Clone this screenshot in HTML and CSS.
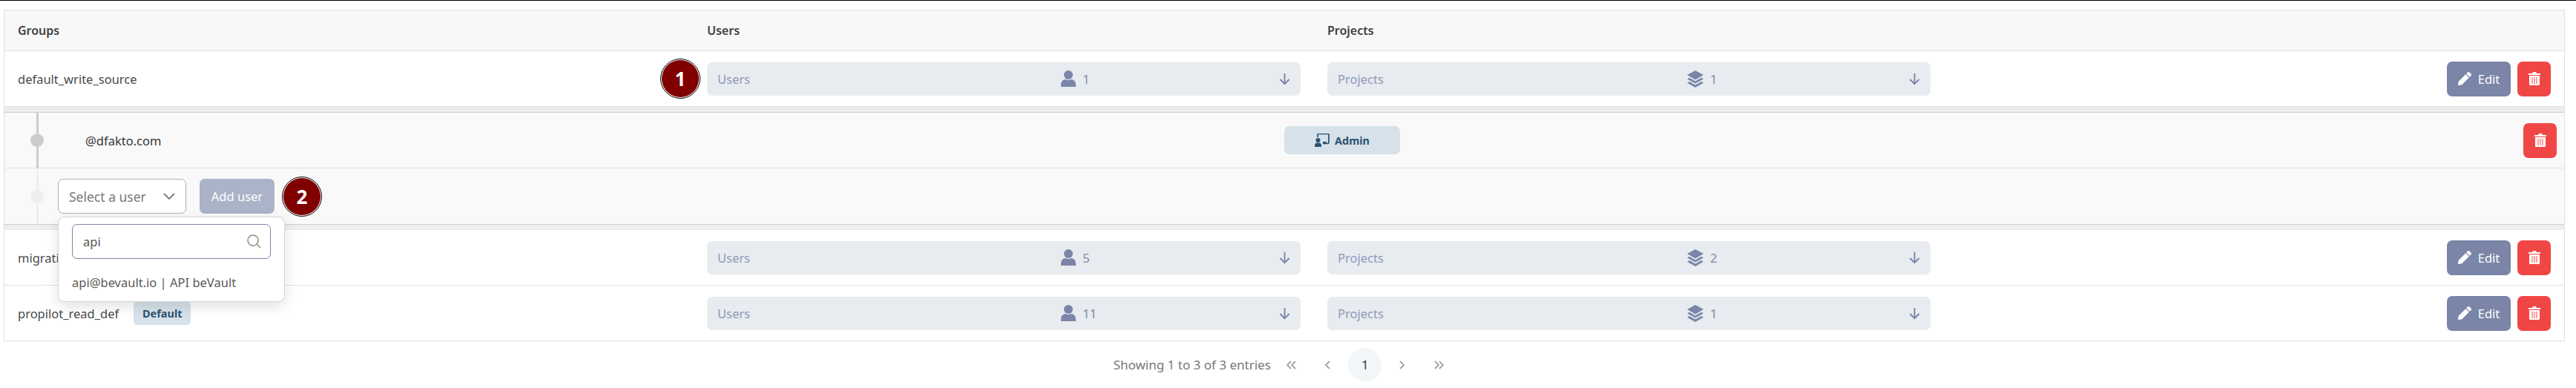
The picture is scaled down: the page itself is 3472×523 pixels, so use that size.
FILE: index.html
```html
<!DOCTYPE html>
<html>
<head>
  <title>Groups</title>
  <link rel="stylesheet" href="styles.css">
</head>
<body>

  <svg class="sprites" width="0" height="0">
    <symbol id="i-user" viewBox="0 0 20 22"><circle cx="10" cy="6" r="6"/><path d="M0 22v-3c0-4 3-7 6-7 1.300.700 2.600 1 4 1s2.700-.3 4-1c3 0 6 3 6 7v3z"/></symbol>
    <symbol id="i-stack" viewBox="0 0 22 23"><path d="M11 0l11 6-11 6.500L0 6z"/><path d="M3 9.800l8 4.700 8-4.700 3 1.700-11 6L0 11.500z"/><path d="M3 15l8 4.500 8-4.500 3 1.700L11 23 0 16.700z"/></symbol>
    <symbol id="i-down" viewBox="0 0 16 18"><path d="M8 1v15M1.500 9.500L8 16l6.500-6.500" fill="none" stroke="currentColor" stroke-width="2"/></symbol>
    <symbol id="i-pencil" viewBox="0 0 512 512"><path d="M498 142l-46 46c-5 5-12 5-17 0L324 77c-5-5-5-12 0-17l46-46c19-19 49-19 68 0l60 60c19 19 19 49 0 68zM284 100L22 362 0 484c-3 16 11 31 28 28l122-21 262-263c5-5 5-12 0-17L301 100c-5-5-12-5-17 0z"/></symbol>
    <symbol id="i-trash" viewBox="0 0 16 18"><path d="M0 2h5l1-2h4l1 2h5v2H0z"/><path fill-rule="evenodd" d="M1 5h14v11.500c0 1-.7 1.500-1.500 1.500h-11C1.700 18 1 17.500 1 16.500zM4.500 7v9h1V7zM7.500 7v9h1V7zM10.500 7v9h1V7z"/></symbol>
    <symbol id="i-board" viewBox="0 0 20 18"><circle cx="4.500" cy="9" r="3"/><path d="M0 18v-2c0-2 1.500-3.500 3-3.500h3c1.500 0 3 1.500 3 3.500v2z"/><path d="M4 5V2c0-1 .6-1.500 1.500-1.500h12C18.400.500 19 1 19 2v10c0 1-.6 1.500-1.500 1.500H11" fill="none" stroke="currentColor" stroke-width="1.700"/><path d="M11 11h5v2h-5z"/></symbol>
    <symbol id="i-chevron" viewBox="0 0 16 16"><path d="M1 4l7 7 7-7" fill="none" stroke="currentColor" stroke-width="1.800"/></symbol>
    <symbol id="i-search" viewBox="0 0 20 20"><circle cx="8.500" cy="8.500" r="7.500" fill="none" stroke="currentColor" stroke-width="1.500"/><path d="M14 14l5 5" stroke="currentColor" stroke-width="1.500"/></symbol>
    <symbol id="i-first" viewBox="0 0 16 12"><path d="M7 1L2 6l5 5M13 1L8 6l5 5" fill="none" stroke="currentColor" stroke-width="1.800"/></symbol>
    <symbol id="i-prev" viewBox="0 0 16 12"><path d="M10 1L5 6l5 5" fill="none" stroke="currentColor" stroke-width="1.800"/></symbol>
    <symbol id="i-next" viewBox="0 0 16 12"><path d="M6 1l5 5-5 5" fill="none" stroke="currentColor" stroke-width="1.800"/></symbol>
    <symbol id="i-last" viewBox="0 0 16 12"><path d="M3 1l5 5-5 5M9 1l5 5-5 5" fill="none" stroke="currentColor" stroke-width="1.800"/></symbol>
  </svg>

  <div class="table">
    <div class="row row-head">
      <div class="cell-group">Groups</div>
      <div>Users</div>
      <div>Projects</div>
      <div></div>
    </div>

    <div class="row">
      <div class="cell-group">
        <span class="group-name">default_write_source</span>
        <span class="marker">1</span>
      </div>
      <div class="cell-users">
        <div class="pill">
          <span>Users</span>
          <span class="count"><svg class="icon-user"><use href="#i-user"/></svg>1</span>
          <svg class="icon-down"><use href="#i-down"/></svg>
        </div>
      </div>
      <div>
        <div class="pill">
          <span>Projects</span>
          <span class="count"><svg class="icon-stack"><use href="#i-stack"/></svg>1</span>
          <svg class="icon-down"><use href="#i-down"/></svg>
        </div>
      </div>
      <div class="actions">
        <button class="btn btn-edit"><svg class="icon-pencil"><use href="#i-pencil"/></svg>Edit</button>
        <button class="btn btn-delete"><svg class="icon-trash"><use href="#i-trash"/></svg></button>
      </div>
    </div>

    <div class="band"></div>

    <div class="sub-rows">
      <div class="sub-row">
        <div class="tree">
          <span class="tree-line"></span>
          <span class="tree-dot"></span>
          <span class="tree-line"></span>
        </div>
        <div class="member">@dfakto.com</div>
        <div class="role"><svg class="icon-board"><use href="#i-board"/></svg>Admin</div>
        <button class="btn btn-delete btn-delete-sub"><svg class="icon-trash"><use href="#i-trash"/></svg></button>
      </div>
      <div class="sub-row sub-row-add">
        <div class="tree tree-light">
          <span class="tree-line"></span>
          <span class="tree-dot"></span>
          <span class="tree-line"></span>
        </div>
        <div class="select-wrap">
          <div class="select">Select a user<svg class="icon-chevron"><use href="#i-chevron"/></svg></div>
          <div class="dropdown">
            <div class="search">api<svg class="icon-search"><use href="#i-search"/></svg></div>
            <div class="option">api@bevault.io | API beVault</div>
          </div>
        </div>
        <button class="btn btn-add">Add user</button>
        <span class="marker">2</span>
      </div>
    </div>

    <div class="band"></div>

    <div class="row">
      <div class="cell-group"><span class="group-name">migration_source</span></div>
      <div class="cell-users">
        <div class="pill">
          <span>Users</span>
          <span class="count"><svg class="icon-user"><use href="#i-user"/></svg>5</span>
          <svg class="icon-down"><use href="#i-down"/></svg>
        </div>
      </div>
      <div>
        <div class="pill">
          <span>Projects</span>
          <span class="count"><svg class="icon-stack"><use href="#i-stack"/></svg>2</span>
          <svg class="icon-down"><use href="#i-down"/></svg>
        </div>
      </div>
      <div class="actions">
        <button class="btn btn-edit"><svg class="icon-pencil"><use href="#i-pencil"/></svg>Edit</button>
        <button class="btn btn-delete"><svg class="icon-trash"><use href="#i-trash"/></svg></button>
      </div>
    </div>

    <div class="row">
      <div class="cell-group cell-start">
        <span class="group-name">propilot_read_def</span>
        <span class="badge">Default</span>
      </div>
      <div class="cell-users">
        <div class="pill">
          <span>Users</span>
          <span class="count"><svg class="icon-user"><use href="#i-user"/></svg>11</span>
          <svg class="icon-down"><use href="#i-down"/></svg>
        </div>
      </div>
      <div>
        <div class="pill">
          <span>Projects</span>
          <span class="count"><svg class="icon-stack"><use href="#i-stack"/></svg>1</span>
          <svg class="icon-down"><use href="#i-down"/></svg>
        </div>
      </div>
      <div class="actions">
        <button class="btn btn-edit"><svg class="icon-pencil"><use href="#i-pencil"/></svg>Edit</button>
        <button class="btn btn-delete"><svg class="icon-trash"><use href="#i-trash"/></svg></button>
      </div>
    </div>
  </div>

  <div class="pagination">
    <span class="entries">Showing 1 to 3 of 3 entries</span>
    <span class="page-btn"><svg class="icon-page"><use href="#i-first"/></svg></span>
    <span class="page-btn"><svg class="icon-page"><use href="#i-prev"/></svg></span>
    <span class="page-btn page-current">1</span>
    <span class="page-btn"><svg class="icon-page"><use href="#i-next"/></svg></span>
    <span class="page-btn"><svg class="icon-page"><use href="#i-last"/></svg></span>
  </div>

</body>
</html>
```

FILE: styles.css
```css
html, body {
  margin: 0;
  padding: 0;
}
body {
  font-family: "Noto Sans", sans-serif;
  font-size: 16.500px;
  color: #4a4a4a;
  background-color: #fff;
  border-top: 1px solid #000;
  padding: 12px 15px 0 5px;
}
.sprites {
  position: absolute;
}
svg {
  fill: currentColor;
  flex: none;
}

.table {
  border: 1px solid #e0e0e0;
  border-bottom: none;
}
.row {
  display: grid;
  grid-template-columns: 947px 836px 813px 1fr;
  align-items: center;
  height: 74px;
  border-bottom: 1px solid #e0e0e0;
}
.row-head {
  height: 54px;
  background-color: #f8f8f8;
  font-size: 16px;
  font-weight: 600;
  color: #3f3f3f;
}
.cell-group {
  display: flex;
  align-items: center;
  justify-content: space-between;
  padding: 0 10px 0 18px;
}
.cell-start {
  justify-content: flex-start;
  gap: 20px;
}
.cell-users {
  padding-right: 36px;
}

.pill {
  display: grid;
  grid-template-columns: 60% 1fr auto;
  align-items: center;
  height: 45px;
  padding: 0 14px;
  box-sizing: border-box;
  background-color: #e8ebef;
  border-radius: 7px;
  color: #8e9abb;
}
.count {
  display: flex;
  align-items: center;
  gap: 9px;
  color: #7f8aa9;
}
.icon-user {
  width: 20px;
  height: 22px;
  color: #7a85a8;
}
.icon-stack {
  width: 22px;
  height: 23px;
  color: #7a85a8;
}
.icon-down {
  width: 15px;
  height: 17px;
  color: #7a85a8;
}

.actions {
  display: flex;
  justify-content: flex-end;
  gap: 9px;
  padding-right: 18px;
}
.btn {
  display: flex;
  align-items: center;
  justify-content: center;
  height: 47px;
  padding: 0;
  border: none;
  border-radius: 7px;
  color: #fff;
  font-family: inherit;
  font-size: 16.500px;
  cursor: pointer;
}
.btn-edit {
  width: 86px;
  gap: 9px;
  background-color: #7a85a8;
}
.btn-delete {
  width: 45px;
  background-color: #f14646;
}
.btn-add {
  width: 101px;
  background-color: #abb3c8;
  margin-left: 18px;
}
.icon-pencil {
  width: 18px;
  height: 18px;
}
.icon-trash {
  width: 16px;
  height: 18px;
}

.band {
  height: 7px;
  background-color: #ededed;
  border-bottom: 1px solid #cfcfcf;
}
.sub-rows + .band {
  border-top: 1px solid #cfcfcf;
  border-bottom: none;
}
.sub-rows {
  background-color: #f9f9f9;
}
.sub-row {
  display: flex;
  align-items: center;
  height: 74px;
}
.sub-row:first-child {
  border-bottom: 1px solid #e0e0e0;
}
.sub-row-add {
  height: 75px;
}

.tree {
  display: flex;
  flex-direction: column;
  align-items: center;
  align-self: stretch;
  margin: 0 19px 0 35px;
}
.tree-line {
  flex: 1;
  width: 3px;
  background-color: #cccccc;
}
.tree-dot {
  width: 18px;
  height: 18px;
  border-radius: 50%;
  background-color: #cccccc;
}
.tree-light .tree-line,
.tree-light .tree-dot {
  background-color: #eeeeee;
}

.member {
  width: 1616px;
  margin-left: 37px;
  color: #363636;
}
.role {
  display: flex;
  align-items: center;
  justify-content: center;
  gap: 7px;
  width: 156px;
  height: 38px;
  border-radius: 7px;
  background-color: #d6e1e9;
  color: #2d5271;
  font-size: 14.500px;
  font-weight: 700;
}
.icon-board {
  width: 20px;
  height: 18px;
}
.btn-delete-sub {
  margin-left: auto;
  margin-right: 10px;
}
.badge {
  display: flex;
  align-items: center;
  justify-content: center;
  width: 77px;
  height: 32px;
  border-radius: 6px;
  background-color: #d6e1e9;
  color: #2d5271;
  font-size: 14.500px;
  font-weight: 700;
}

.select-wrap {
  position: relative;
}
.select {
  display: flex;
  align-items: center;
  justify-content: space-between;
  width: 173px;
  height: 47px;
  padding: 0 14px;
  box-sizing: border-box;
  border: 1px solid #b0b0b0;
  border-radius: 7px;
  background-color: #fff;
  color: #7a7a7a;
  font-size: 17.500px;
}
.icon-chevron {
  width: 16px;
  height: 16px;
  color: #7a7a7a;
}
.dropdown {
  position: absolute;
  top: 51px;
  left: 0;
  z-index: 5;
  width: 306px;
  height: 115px;
  padding: 9px 18px;
  box-sizing: border-box;
  border: 1px solid #d5d5d5;
  border-radius: 9px;
  background-color: #fff;
  box-shadow: 0 6px 18px rgba(0, 0, 0, 0.12);
  font-size: 16.500px;
}
.search {
  display: flex;
  align-items: center;
  justify-content: space-between;
  height: 47px;
  padding: 0 12px 0 14px;
  box-sizing: border-box;
  border: 1px solid #7a85a8;
  border-radius: 7px;
  color: #555;
}
.icon-search {
  width: 19px;
  height: 19px;
  color: #8a8a8a;
}
.option {
  margin-top: 20px;
  color: #5a5a5a;
}

.marker {
  display: flex;
  align-items: center;
  justify-content: center;
  width: 50px;
  height: 50px;
  margin-left: 11px;
  border: 1px solid #fff;
  border-radius: 50%;
  outline: 1px solid #000;
  background-color: #800000;
  color: #fff;
  font-size: 26px;
  font-weight: 700;
}

.pagination {
  display: flex;
  align-items: center;
  justify-content: center;
  gap: 4.500px;
  padding-top: 9px;
  font-size: 17px;
  color: #777;
}
.entries {
  margin-right: 1px;
}
.page-btn {
  display: flex;
  align-items: center;
  justify-content: center;
  width: 45px;
  height: 45px;
  border-radius: 50%;
  color: #a3a3a3;
}
.page-current {
  background-color: #f3f6f8;
  color: #363636;
}
.icon-page {
  width: 16px;
  height: 12px;
}
```
